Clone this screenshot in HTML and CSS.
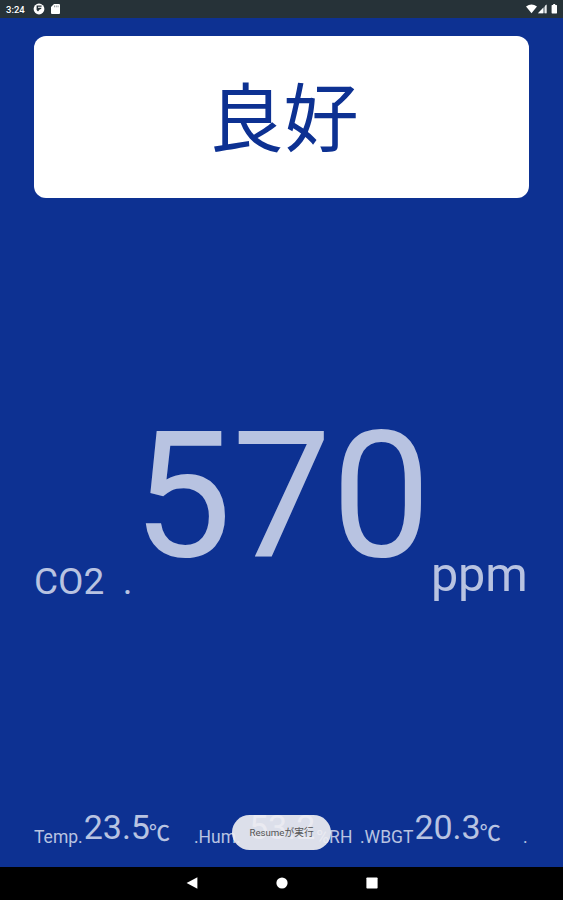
FILE: index.html
```
<!DOCTYPE html>
<html lang="ja">
<head>
    <meta charset="UTF-8">
    <meta name="viewport" content="width=device-width, initial-scale=1.0">
    <title>CO2 Monitor</title>
    <link rel="stylesheet" href="styles.css">
</head>
<body>
    <header class="status-bar">
        <span class="clock">3:24</span>
        <svg class="app-icon" viewBox="0 0 12 12">
            <circle cx="6" cy="6" r="5.4" fill="#fff"/>
            <path d="M3.6 2.6h5v1.2H5v1h3.6q-.2 1.8-2 1.8L5 8.4 3.6 7z" fill="#263238"/>
        </svg>
        <svg class="sd-icon" viewBox="0 0 9 10">
            <path d="M3 0h5a1 1 0 0 1 1 1v8a1 1 0 0 1-1 1H1a1 1 0 0 1-1-1V3z" fill="#fff"/>
            <path d="M3 1.4h.9v1.8H3zM4.8 1.4h.9v1.8h-.9zM6.6 1.4h.9v1.8h-.9z" fill="#8b9397"/>
        </svg>
        <svg class="system-icons" viewBox="0 0 34 12">
            <path d="M0 3.6Q5.5-.8 11 3.6L5.5 10.2z" fill="#fff"/>
            <path d="M12 10.2L20.5 1.4v8.8z" fill="#9aa2a6"/>
            <path d="M12 10.2L17 5v5.2z" fill="#fff"/>
            <path d="M19.2 2.8l1.3-1.4v8.8h-1.3z" fill="#fff"/>
            <path d="M27.2 1h2v1h1.3q.5 0 .5.6v7.2q0 .6-.5.6h-4.4q-.5 0-.5-.6V2.6q0-.6.5-.6h1.1z" fill="#fff"/>
        </svg>
    </header>

    <main class="monitor">
        <div class="level">良好</div>

        <div class="co2">
            <span class="co2-label">CO2&nbsp; .</span>
            <span class="co2-value">570</span>
            <span class="co2-unit">ppm</span>
        </div>

        <div class="sensors">
            <div class="sensor temp">
                <span class="label">Temp.</span>
                <span class="value">23.5</span>
                <span class="unit celsius">℃</span>
            </div>
            <div class="sensor hum">
                <span class="label">.Hum.</span>
                <span class="value">53.2</span>
                <span class="unit">%RH</span>
            </div>
            <div class="sensor wbgt">
                <span class="label">.WBGT</span>
                <span class="value">20.3</span>
                <span class="unit celsius">℃</span>
            </div>
            <span class="label end">.</span>
        </div>

        <div class="toast">Resumeが実行</div>
    </main>

    <nav class="nav-bar">
        <svg viewBox="0 0 12 12"><path d="M.6 6L11.4.2v11.6z" fill="#fff"/></svg>
        <svg viewBox="0 0 12 12"><circle cx="6" cy="6" r="5.6" fill="#fff"/></svg>
        <svg viewBox="0 0 12 12"><rect x=".4" y=".4" width="11.2" height="11.2" rx=".8" fill="#fff"/></svg>
    </nav>
</body>
</html>
```
FILE: styles.css
```
* {
    margin: 0;
    padding: 0;
    box-sizing: border-box;
}

body {
    width: 100%;
    height: 100vh;
    display: flex;
    flex-direction: column;
    overflow: hidden;
    background: #0d3192;
    color: #b8c3e1;
    font-family: Roboto, "Noto Sans CJK JP", sans-serif;
}

.status-bar {
    height: 18px;
    padding: 0 4px 0 6px;
    display: flex;
    align-items: center;
    background: #263238;
    color: #fff;
}

.clock {
    width: 27px;
    font-size: 9.5px;
    font-weight: 500;
}

.app-icon {
    width: 12px;
    height: 12px;
}

.sd-icon {
    width: 9px;
    height: 10px;
    margin-left: 6px;
}

.system-icons {
    width: 34px;
    height: 12px;
    margin-left: auto;
    margin-right: -1px;
}

.monitor {
    position: relative;
    flex: 1;
    padding: 18px 34px 0;
    display: flex;
    flex-direction: column;
}

.level {
    height: 162px;
    padding: 0 0 7px 4px;
    display: flex;
    justify-content: center;
    align-items: center;
    border-radius: 12px;
    background: #fff;
    color: #0d3192;
    font-family: "Noto Sans CJK JP", sans-serif;
    font-size: 75px;
    line-height: 1;
}

.co2 {
    height: 406px;
    display: flex;
    align-items: flex-end;
    white-space: nowrap;
}

.co2 span {
    padding-bottom: 0.027em;
}

.co2-label {
    font-size: 37px;
}

.co2-value {
    font-size: 177px;
}

.co2-unit {
    font-size: 48.5px;
}

.sensors {
    height: 244px;
    display: flex;
    align-items: flex-end;
    white-space: nowrap;
}

.sensor {
    display: flex;
    align-items: flex-end;
}

.label,
.unit {
    font-size: 17.5px;
    line-height: 21px;
}

.value {
    font-size: 34px;
    line-height: 41px;
}

.celsius {
    margin-left: -1px;
    font-size: 21px;
    font-weight: 500;
    line-height: 29px;
}

.temp {
    width: 160px;
}

.temp .value {
    margin-left: 1px;
}

.hum {
    width: 166px;
}

.hum .label {
    width: 55px;
}

.hum .unit {
    margin-left: 1px;
}

.wbgt {
    width: 163px;
}

.wbgt .value {
    margin-left: 1px;
}

.toast {
    position: absolute;
    left: 232px;
    bottom: 17px;
    width: 99px;
    height: 35px;
    border-radius: 18px;
    background: rgba(238, 238, 242, 0.92);
    color: #555;
    font-size: 9.7px;
    line-height: 35px;
    text-align: center;
}

.nav-bar {
    height: 33px;
    padding: 0 0 1px;
    display: flex;
    justify-content: center;
    align-items: center;
    gap: 78px;
    background: #000;
}

.nav-bar svg {
    width: 12px;
    height: 12px;
}
```
